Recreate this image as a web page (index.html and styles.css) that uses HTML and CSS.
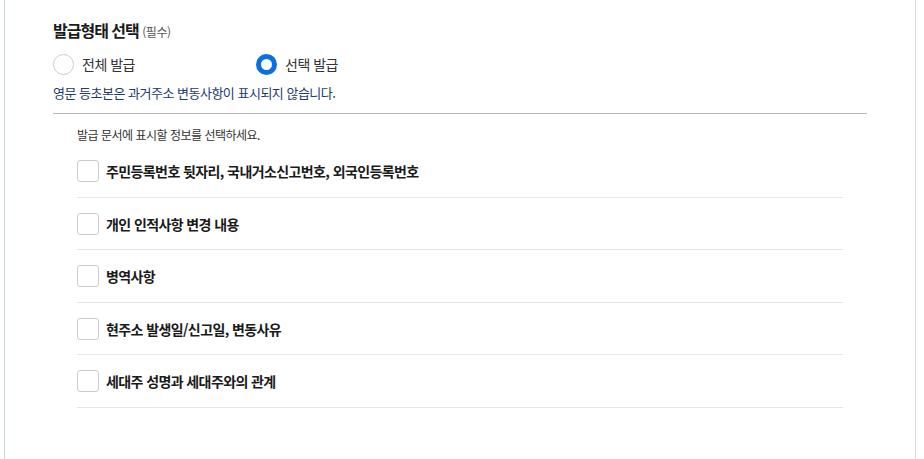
FILE: index.html
```html
<!DOCTYPE html>
<html lang="ko">
<head>
  <meta charset="UTF-8">
  <title>발급형태 선택</title>
  <meta name="viewport" content="width=device-width, initial-scale=1">
  <link rel="stylesheet" href="styles.css">
</head>
<body>
  <div class="panel">
    <h2 class="title">발급형태 선택 <span class="req">(필수)</span></h2>

    <div class="radios">
      <label class="radio">
        <span class="dot"></span>
        <span>전체 발급</span>
      </label>
      <label class="radio on">
        <span class="dot"></span>
        <span>선택 발급</span>
      </label>
    </div>

    <p class="note">영문 등초본은 과거주소 변동사항이 표시되지 않습니다.</p>

    <div class="select-box">
      <p class="guide">발급 문서에 표시할 정보를 선택하세요.</p>
      <ul class="checks">
        <li><span class="box"></span>주민등록번호 뒷자리, 국내거소신고번호, 외국인등록번호</li>
        <li><span class="box"></span>개인 인적사항 변경 내용</li>
        <li><span class="box"></span>병역사항</li>
        <li><span class="box"></span>현주소 발생일/신고일, 변동사유</li>
        <li><span class="box"></span>세대주 성명과 세대주와의 관계</li>
      </ul>
    </div>
  </div>
</body>
</html>
```

FILE: styles.css
```css
body {
  margin: 0;
  background: #fff;
  color: #222;
  font-family: "Noto Sans CJK KR", "Noto Sans", sans-serif;
}

.panel {
  margin-left: 4px;
  width: 912px;
  height: 459px;
  box-sizing: border-box;
  border-left: 1px solid #c9d7f5;
  border-right: 1px solid #d8dbe8;
  padding: 19px 48px 0;
}

.title {
  margin: 0;
  font-size: 16px;
  font-weight: 700;
  letter-spacing: -1px;
  color: #1a1a1a;
  line-height: 22px;
}

.req {
  font-size: 12px;
  font-weight: 400;
  color: #555;
  letter-spacing: -0.5px;
}

.radios {
  display: flex;
  margin-top: 10px;
  height: 22px;
}

.radio {
  display: flex;
  align-items: center;
  gap: 8px;
  width: 203px;
  font-size: 14px;
  color: #333;
  letter-spacing: -0.5px;
}

.dot {
  width: 21px;
  height: 21px;
  box-sizing: border-box;
  border: 1px solid #ccc;
  border-radius: 50%;
}

.radio.on .dot {
  border: 5px solid #0b6fe3;
}

.note {
  margin: 9px 0 0;
  font-size: 13px;
  line-height: 18px;
  color: #1c3a70;
  letter-spacing: -0.5px;
}

.select-box {
  margin-top: 11px;
  border-top: 1px solid #b8b9c1;
  padding: 0 24px;
}

.guide {
  margin: 12px 0 0;
  font-size: 12px;
  line-height: 18px;
  color: #333;
  letter-spacing: -0.5px;
}

.checks {
  list-style: none;
  margin: 1px 0 0;
  padding: 0;
}

.checks li {
  display: flex;
  align-items: center;
  gap: 7px;
  padding: 15px 0 14.5px;
  border-bottom: 1px solid #e4e4ea;
  font-size: 14px;
  font-weight: 700;
  color: #1a1a1a;
  letter-spacing: -0.6px;
  line-height: 22px;
}

.box {
  width: 22px;
  height: 22px;
  box-sizing: border-box;
  border: 1px solid #ccc;
  border-radius: 3px;
  flex: none;
}
```
